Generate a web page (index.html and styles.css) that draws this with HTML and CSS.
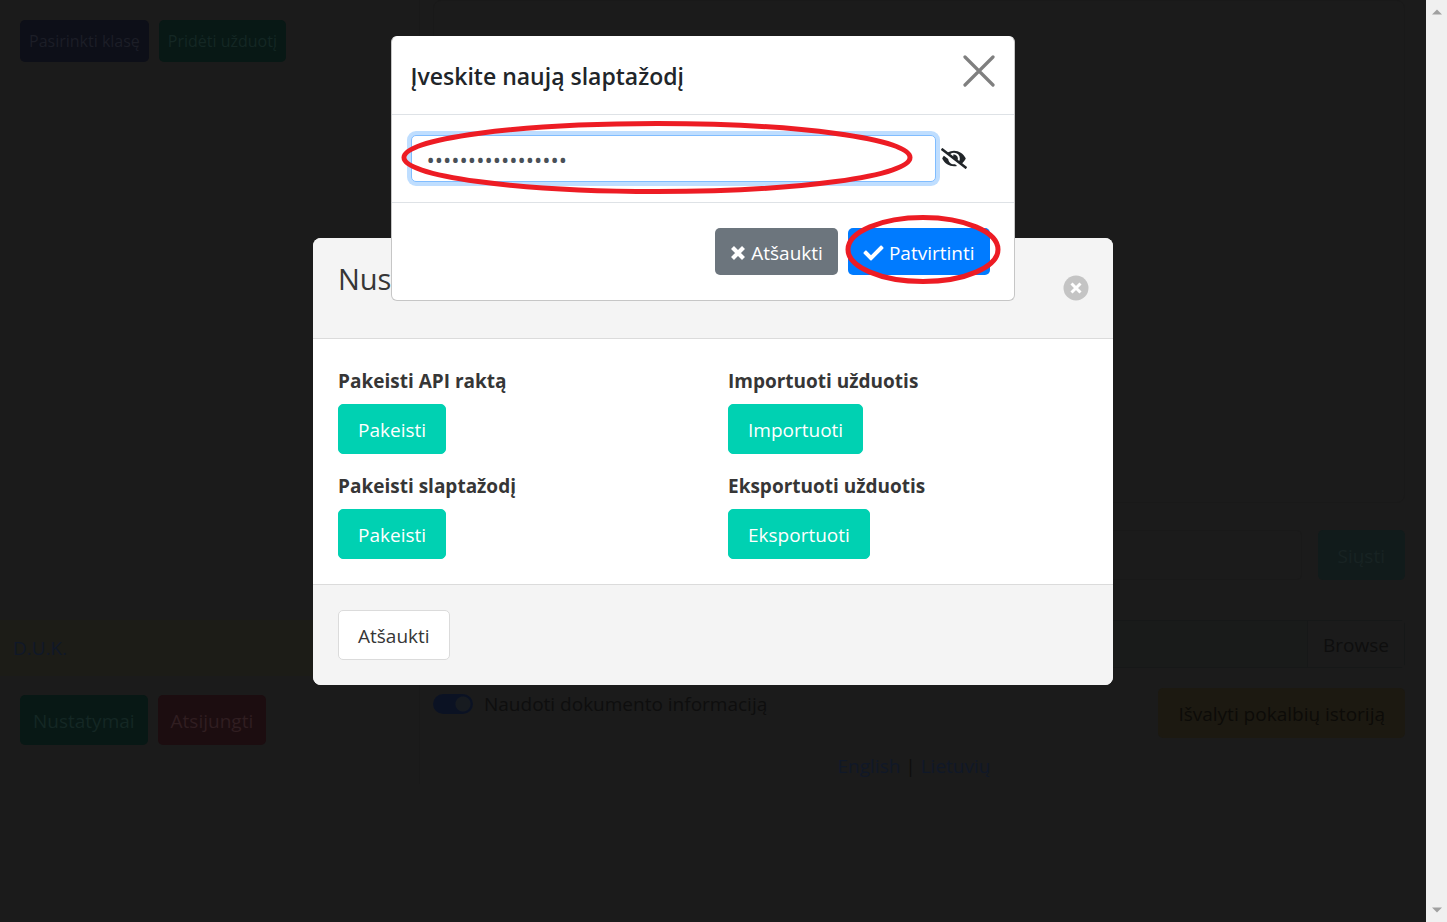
FILE: index.html
```html
<!DOCTYPE html>
<html lang="lt">
<head>
<meta charset="utf-8">
<title>Nustatymai</title>
<link rel="stylesheet" href="styles.css">
</head>
<body>
<div class="app">
  <aside class="sidebar">
    <div class="sidebar-top">
      <button class="dim-btn dim-btn-small dim-navy" type="button">Pasirinkti klasę</button>
      <button class="dim-btn dim-btn-small dim-green" type="button">Pridėti užduotį</button>
    </div>
    <div class="faq"><a href="#">D.U.K.</a></div>
    <div class="sidebar-bottom">
      <button class="dim-btn dim-green" type="button">Nustatymai</button>
      <button class="dim-btn dim-red" type="button">Atsijungti</button>
    </div>
  </aside>
  <main class="main">
    <section class="chat"></section>
    <form class="compose">
      <input class="message" type="text" aria-label="Žinutė">
      <button class="dim-btn dim-teal" type="button">Siųsti</button>
    </form>
    <label class="file"><input class="file-input" type="file"><span class="file-button">Browse</span></label>
    <div class="options">
      <label class="switch-label"><input class="switch" type="checkbox" checked>Naudoti dokumento informaciją</label>
      <button class="dim-btn dim-olive" type="button">Išvalyti pokalbių istoriją</button>
    </div>
    <nav class="languages"><a href="#">English</a> | <a href="#">Lietuvių</a></nav>
  </main>
  <div class="scrollbar">
    <svg width="10" height="6" viewBox="0 0 10 6"><path d="M0 5.500 5 .5l5 5z" fill="#a0a0a0"/></svg>
    <svg width="10" height="6" viewBox="0 0 10 6"><path d="M0 .5 5 5.500l5-5z" fill="#a0a0a0"/></svg>
  </div>
</div>

<div class="overlay overlay-center">
  <section class="settings" role="dialog" aria-labelledby="settings-title">
    <header class="settings-head">
      <h1 class="settings-title" id="settings-title">Nustatymai</h1>
      <button class="round-close" type="button" aria-label="Uždaryti">
        <svg width="26" height="26" viewBox="0 0 26 26"><circle cx="13" cy="13" r="12.500" fill="#c4c4c4"/><path d="M8.500 8.500l9 9M17.500 8.500l-9 9" stroke="#fff" stroke-width="3"/></svg>
      </button>
    </header>
    <div class="settings-body">
      <div class="setting"><h2 class="setting-name">Pakeisti API raktą</h2><button class="btn btn-green" type="button">Pakeisti</button></div>
      <div class="setting"><h2 class="setting-name">Importuoti užduotis</h2><button class="btn btn-green" type="button">Importuoti</button></div>
      <div class="setting"><h2 class="setting-name">Pakeisti slaptažodį</h2><button class="btn btn-green" type="button">Pakeisti</button></div>
      <div class="setting"><h2 class="setting-name">Eksportuoti užduotis</h2><button class="btn btn-green" type="button">Eksportuoti</button></div>
    </div>
    <footer class="settings-foot"><button class="btn btn-white" type="button">Atšaukti</button></footer>
  </section>
</div>

<div class="overlay overlay-top">
  <section class="password" role="dialog" aria-labelledby="password-title">
    <header class="password-head">
      <h2 class="password-title" id="password-title">Įveskite naują slaptažodį</h2>
      <button class="plain-close" type="button" aria-label="Uždaryti">
        <svg width="32" height="32" viewBox="0 0 32 32"><path d="M2 2l28 28M30 2L2 30" stroke="#7f7f7f" stroke-width="3.200" stroke-linecap="round"/></svg>
      </button>
    </header>
    <div class="password-body">
      <input class="password-input" type="password" value="slaptazodis123456" aria-labelledby="password-title">
      <button class="reveal" type="button" aria-label="Rodyti slaptažodį">
        <svg width="26" height="21" viewBox="0 0 640 512"><path fill="#212529" d="M320 400c-75.850 0-137.250-58.710-142.900-133.110L72.200 185.820c-13.790 17.300-26.480 35.590-36.720 55.590a32.350 32.350 0 0 0 0 29.190C89.710 376.410 197.070 448 320 448c26.910 0 52.870-4 77.890-10.460L346 397.390a144.130 144.130 0 0 1-26 2.610zm313.820 58.100l-110.550-85.440a331.250 331.250 0 0 0 81.250-102.070 32.350 32.350 0 0 0 0-29.190C550.290 135.590 442.930 64 320 64a308.150 308.150 0 0 0-147.320 37.700L45.460 3.370A16 16 0 0 0 23 6.180L3.370 31.450A16 16 0 0 0 6.180 53.900l588.360 454.730a16 16 0 0 0 22.460-2.810l19.640-25.270a16 16 0 0 0-2.820-22.450zm-183.720-142l-39.300-30.380A94.750 94.750 0 0 0 416 256a94.760 94.760 0 0 0-121.310-92.210A47.650 47.650 0 0 1 304 192a46.640 46.640 0 0 1-1.540 10l-73.610-56.890A142.310 142.310 0 0 1 320 112a143.920 143.920 0 0 1 144 144c0 21.630-5.290 41.790-13.900 60.110z"/></svg>
      </button>
    </div>
    <footer class="password-foot">
      <button class="action action-gray" type="button"><svg width="16" height="20" viewBox="0 0 16 20"><path d="M2.500 4.500l11 11M13.500 4.500l-11 11" stroke="#fff" stroke-width="4.200"/></svg>Atšaukti</button>
      <button class="action action-blue" type="button"><svg width="21" height="20" viewBox="0 0 512 512"><path fill="#fff" d="M173.898 439.404l-166.400-166.400c-9.997-9.997-9.997-26.206 0-36.204l36.203-36.204c9.997-9.998 26.207-9.998 36.204 0L192 312.690 432.095 72.596c9.997-9.997 26.207-9.997 36.204 0l36.203 36.204c9.997 9.997 9.997 26.206 0 36.204l-294.400 294.401c-9.998 9.997-26.207 9.997-36.204-.001z"/></svg>Patvirtinti</button>
    </footer>
    <svg class="marks" width="624" height="265" viewBox="0 0 624 265" fill="none" stroke="#ed1c24" stroke-width="5"><ellipse cx="266" cy="121.500" rx="253" ry="34"/><ellipse cx="532" cy="213.500" rx="75" ry="32"/></svg>
  </section>
</div>
</body>
</html>
```

FILE: styles.css
```css
* { box-sizing: border-box; }

body {
  margin: 0;
  background: #1b1b1b;
  color: #0e0e0e;
  font: 19px/30px "Open Sans", "Noto Sans", sans-serif;
}

button, input { font: inherit; }
button { cursor: pointer; }
h1, h2 { margin: 0; }
a { color: #101828; text-decoration: none; }

/* Dimmed page behind the dialogs */
.app { display: flex; min-height: 100vh; }
.sidebar {
  display: flex;
  flex-direction: column;
  width: 420px;
  height: 784px;
  border-right: 1px solid #191919;
}
.sidebar-top { display: flex; gap: 10px; flex: 1; align-items: flex-start; padding: 20px; }
.faq { padding: 13px; background: #1c1c17; }
.sidebar-bottom { display: flex; gap: 10px; padding: 19px 20px 39px; }

.dim-btn {
  height: 50px;
  padding: 1px 13px 0;
  border: 0;
  border-radius: 5px;
  color: #242629;
  white-space: nowrap;
}
.dim-btn-small { height: 42px; padding: 0 9px; font-size: 16px; }
.dim-navy { background: #0d0f18; color: #1c1e27; }
.dim-green { background: #081815; color: #142724; }
.dim-red { background: #1c0d10; color: #301e21; }
.dim-teal { padding: 1px 20px 0; background: #111b1b; color: #182323; }
.dim-olive { padding: 1px 20px 0; background: #1c1911; color: #0c0b08; }

.main { display: flex; flex-direction: column; flex: 1; padding: 0 21px 0 13px; }
.chat { height: 503px; border: 1px solid #191919; border-radius: 8px; }
.compose { display: flex; gap: 16px; margin-top: 27px; }
.message {
  flex: 1;
  min-width: 0;
  border: 1px solid #191919;
  border-radius: 5px;
  background: transparent;
}
.file {
  display: flex;
  justify-content: flex-end;
  height: 48px;
  margin-top: 40px;
  border: 1px solid #161818;
  border-radius: 5px;
  background: #191b1a;
}
.file-input { width: 1px; height: 1px; opacity: 0; }
.file-button { padding: 9px 15px; border-left: 1px solid #161818; background: #1b1b1b; }
.options { display: flex; justify-content: space-between; align-items: flex-start; margin-top: 20px; }
.switch-label { display: flex; align-items: center; gap: 11px; padding-top: 1px; }
.switch {
  width: 40px;
  height: 20px;
  margin: 0;
  border-radius: 10px;
  appearance: none;
  background: radial-gradient(circle at 30px 10px, #171b20 7px, #0b1223 8px);
}
.languages { margin-top: 13px; padding-right: 10px; text-align: center; }

.scrollbar {
  display: flex;
  flex-direction: column;
  justify-content: space-between;
  align-items: center;
  width: 21px;
  padding: 9px 0;
  background: #f0f0f0;
}

/* Dialogs */
.overlay { position: fixed; inset: 0 21px 0 0; display: flex; justify-content: center; }
.overlay-center { align-items: center; }
.overlay-top { align-items: flex-start; padding: 36px 21px 0 0; }

.settings { width: 800px; border-radius: 8px; overflow: hidden; background: #fff; color: #363636; }
.settings-head {
  display: flex;
  justify-content: space-between;
  align-items: center;
  height: 101px;
  padding: 0 24px 0 25px;
  border-bottom: 1px solid #dbdbdb;
  background: #f4f4f4;
}
.settings-title { padding-bottom: 18px; font-size: 29px; font-weight: 400; line-height: 40px; }
.round-close, .plain-close, .reveal { display: flex; padding: 0; border: 0; background: none; }
.settings-body { display: grid; grid-template-columns: 1fr 1fr; gap: 15px 30px; padding: 25px; }
.setting-name { padding-top: 2px; margin-bottom: 8px; font-size: 19px; line-height: 30px; font-weight: 700; }
.settings-foot { padding: 25px; border-top: 1px solid #dbdbdb; background: #f4f4f4; }
.btn {
  height: 50px;
  padding: 2px 19px 0;
  border: 1px solid #00d1b2;
  border-radius: 5px;
}
.btn-green { background: #00d1b2; color: #fff; }
.btn-white { border-color: #dbdbdb; background: #fff; color: #363636; }

.password {
  position: relative;
  width: 624px;
  border: 1px solid #c6c6c6;
  border-top-color: #fff;
  border-radius: 6px;
  background: #fff;
  color: #212529;
}
.password-head {
  display: flex;
  justify-content: space-between;
  align-items: flex-start;
  height: 78px;
  padding: 18px 19px 0;
  border-bottom: 1px solid #dee2e6;
}
.password-title { padding-top: 3px; font-size: 23px; line-height: 36px; font-weight: 600; }
.password-body { display: flex; align-items: center; gap: 5px; padding: 20px 47px 20px 19px; }
.password-input {
  flex: 1;
  min-width: 0;
  height: 47px;
  padding: 0 15px;
  border: 1px solid #80bdff;
  border-radius: 5px;
  outline: 0;
  box-shadow: 0 0 0 4px #bfdeff;
  color: #495057;
  font-size: 22px;
}
.password-foot {
  display: flex;
  justify-content: flex-end;
  gap: 10px;
  padding: 25px 24px;
  border-top: 1px solid #dee2e6;
}
.action {
  display: flex;
  align-items: center;
  gap: 5px;
  height: 47px;
  padding: 3px 15px 0;
  border: 0;
  border-radius: 5px;
  color: #fff;
}
.action-gray { background: #6c757d; }
.action-blue { background: #007bff; }
.marks { position: absolute; top: -1px; left: -1px; pointer-events: none; }
```
